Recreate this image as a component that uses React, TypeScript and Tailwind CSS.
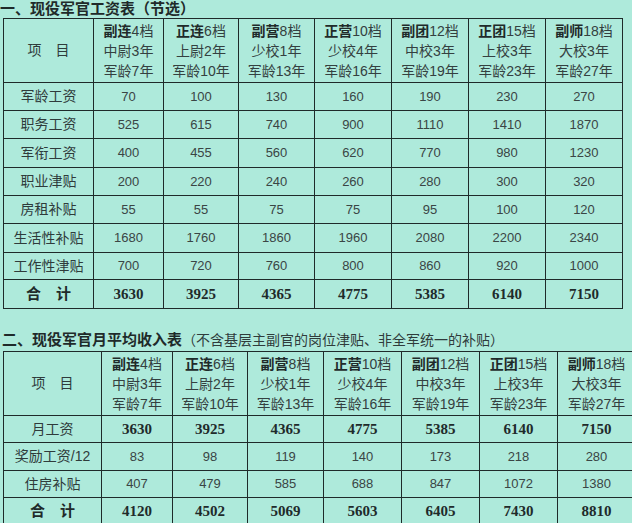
import type { ReactNode } from 'react'

const ranks = [
  { title: '副连', grade: '4档', rank: '中尉3年', age: '军龄7年' },
  { title: '正连', grade: '6档', rank: '上尉2年', age: '军龄10年' },
  { title: '副营', grade: '8档', rank: '少校1年', age: '军龄13年' },
  { title: '正营', grade: '10档', rank: '少校4年', age: '军龄16年' },
  { title: '副团', grade: '12档', rank: '中校3年', age: '军龄19年' },
  { title: '正团', grade: '15档', rank: '上校3年', age: '军龄23年' },
  { title: '副师', grade: '18档', rank: '大校3年', age: '军龄27年' },
]

interface Row {
  label: string
  values: number[]
  bold?: boolean
  total?: boolean
  h: string
}

const salaryRows: Row[] = [
  { label: '军龄工资', values: [70, 100, 130, 160, 190, 230, 270], h: 'h-[28px]' },
  { label: '职务工资', values: [525, 615, 740, 900, 1110, 1410, 1870], h: 'h-[28px]' },
  { label: '军衔工资', values: [400, 455, 560, 620, 770, 980, 1230], h: 'h-[29px]' },
  { label: '职业津贴', values: [200, 220, 240, 260, 280, 300, 320], h: 'h-[28px]' },
  { label: '房租补贴', values: [55, 55, 75, 75, 95, 100, 120], h: 'h-[28px]' },
  { label: '生活性补贴', values: [1680, 1760, 1860, 1960, 2080, 2200, 2340], h: 'h-[29px]' },
  { label: '工作性津贴', values: [700, 720, 760, 800, 860, 920, 1000], h: 'h-[27px]' },
  { label: '合　计', values: [3630, 3925, 4365, 4775, 5385, 6140, 7150], bold: true, total: true, h: 'h-[29px]' },
]

const incomeRows: Row[] = [
  { label: '月工资', values: [3630, 3925, 4365, 4775, 5385, 6140, 7150], bold: true, h: 'h-[27px]' },
  { label: '奖励工资/12', values: [83, 98, 119, 140, 173, 218, 280], h: 'h-[28px]' },
  { label: '住房补贴', values: [407, 479, 585, 688, 847, 1072, 1380], h: 'h-[27px]' },
  { label: '合　计', values: [4120, 4502, 5069, 5603, 6405, 7430, 8810], bold: true, total: true, h: 'h-[27px]' },
]

const cjk = "font-['Liberation_Sans','Noto_Sans_CJK_SC',sans-serif]"
const cell = 'border border-[#1f2a2a] p-0 text-center align-middle'

const PayTable = ({ widths, rows, width }: { widths: number[]; rows: Row[]; width: string }): ReactNode => (
  <table className={`ml-[3px] table-fixed border-collapse ${width}`}>
    <colgroup>
      {widths.map((w, i) => (
        <col key={i} style={{ width: w }} />
      ))}
    </colgroup>
    <tbody>
      <tr className="h-[64px]">
        <td className={`${cell} text-[14px] text-[#2f3b3b]`}>项　目</td>
        {ranks.map((r) => (
          <td key={r.title} className={`${cell} text-[14px] leading-[20px] text-[#344040]`}>
            <div>
              <span className="font-bold text-[#1f2a2a]">{r.title}</span>
              {r.grade}
            </div>
            <div>{r.rank}</div>
            <div>{r.age}</div>
          </td>
        ))}
      </tr>
      {rows.map((row) => (
        <tr key={row.label} className={row.h}>
          <td className={`${cell} text-[14px] ${row.total ? 'text-[15px] font-bold text-[#1f2a2a]' : 'text-[#2f3b3b]'}`}>
            {row.label}
          </td>
          {row.values.map((v, i) => (
            <td
              key={i}
              className={`${cell} ${
                row.bold
                  ? "font-['Liberation_Serif',serif] text-[15px] font-bold text-[#1f2b2b]"
                  : 'text-[13px] text-[#3a4545]'
              }`}
            >
              {v}
            </td>
          ))}
        </tr>
      ))}
    </tbody>
  </table>
)

export default function App() {
  return (
    <div className={`h-[523px] w-[632px] overflow-hidden bg-[#aeeadb] ${cjk}`}>
      <div className="h-[18px] text-[15px] font-bold leading-[18px] text-[#1f2a2a]">一、现役军官工资表（节选）</div>
      <PayTable widths={[90, 70, 75, 76, 77, 77, 77, 77]} rows={salaryRows} width="w-[620px]" />
      <div className="h-[42px] pl-[2px] pt-[21px] leading-[20px] text-[#1f2a2a]">
        <span className="text-[15px] font-bold">二、现役军官月平均收入表</span>
        <span className="text-[14px] text-[#2f3b3b]">（不含基层主副官的岗位津贴、非全军统一的补贴）</span>
      </div>
      <PayTable widths={[98, 71, 75, 76, 78, 78, 78, 78]} rows={incomeRows} width="w-[633px] min-w-[633px]" />
    </div>
  )
}
